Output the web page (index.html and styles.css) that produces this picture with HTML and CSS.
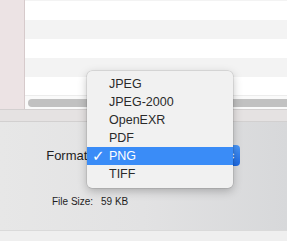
FILE: index.html
```html
<!DOCTYPE html>
<html lang="en">
<head>
    <meta charset="UTF-8">
    <title>Export</title>
    <link rel="stylesheet" href="styles.css">
</head>
<body>
    <div class="window">
        <div class="browser">
            <div class="sidebar"></div>
            <div class="list">
                <div class="rows">
                    <div class="row odd cut"></div>
                    <div class="row"></div>
                    <div class="row odd"></div>
                    <div class="row"></div>
                    <div class="row odd"></div>
                    <div class="row last"></div>
                </div>
                <div class="scrollbar">
                    <div class="thumb"></div>
                </div>
            </div>
        </div>
        <div class="divider"></div>
        <div class="panel">
            <div class="field">
                <span class="label">Format:</span>
                <div class="popup-btn">
                    <span class="arrows">
                        <svg width="6" height="10" viewBox="0 0 6 10"><path d="M1 4 L3 2 L5 4 M1 6 L3 8 L5 6" fill="none" stroke="#fff" stroke-width="1.2"/></svg>
                    </span>
                </div>
            </div>
            <div class="check-row">
                <span class="checkbox"></span>
            </div>
            <div class="info">
                <span class="info-label">File Size:</span>
                <span class="info-value">59 KB</span>
            </div>
        </div>
        <div class="footer"></div>

        <div class="menu">
            <div class="item">JPEG</div>
            <div class="item">JPEG-2000</div>
            <div class="item">OpenEXR</div>
            <div class="item">PDF</div>
            <div class="item selected"><span class="tick">✓</span>PNG</div>
            <div class="item">TIFF</div>
        </div>
    </div>
</body>
</html>
```

FILE: styles.css
```css
body {
    margin: 0;
    font-family: 'Liberation Sans', Arial, sans-serif;
    color: #262626;
    overflow: hidden;
}
.window {
    position: relative;
    width: 287px;
    height: 241px;
    display: flex;
    flex-direction: column;
    overflow: hidden;
}
.browser {
    display: flex;
    height: 110px;
    border-bottom: 1px solid #d3d0d0;
    box-sizing: border-box;
}
.sidebar {
    width: 24px;
    background: #ece3e4;
    border-right: 1px solid #d6cacb;
}
.list {
    flex: 1;
    display: flex;
    flex-direction: column;
    background: #fff;
}
.rows {
    flex: 1;
}
.row {
    height: 19px;
    background: #fff;
}
.row.odd {
    background: #f3f3f3;
}
.row.cut {
    height: 1px;
}
.row.last {
    height: 18px;
}
.scrollbar {
    height: 14px;
    border-top: 1px solid #ececec;
    background: #fafafa;
    padding: 3px 0 0 3px;
    box-sizing: border-box;
}
.thumb {
    height: 8px;
    background: #c1c1c1;
    border-radius: 4px 0 0 4px;
}
.divider {
    height: 11px;
    background: #e5e2e2;
    border-bottom: 1px solid #d2d0d0;
}
.panel {
    flex: 1;
    background: linear-gradient(to right, #e7e7e7 0%, #e2e2e3 50%, #d7d8da 100%);
    padding: 23px 0 0 0;
    display: flex;
    flex-direction: column;
}
.field {
    display: flex;
    align-items: center;
    height: 21px;
}
.label {
    font-size: 13px;
    width: 92px;
    text-align: right;
    padding-right: 1px;
    box-sizing: border-box;
    color: #1e1e1e;
}
.popup-btn {
    margin-left: 4px;
    width: 144px;
    height: 21px;
    border-radius: 4px;
    background: linear-gradient(#4a97f8, #1c68e2);
    display: flex;
    align-items: center;
    justify-content: flex-end;
    padding: 0 5px;
    box-sizing: border-box;
}
.arrows {
    display: flex;
}
.check-row {
    display: flex;
    align-items: center;
    margin: 8px 0 0 100px;
    height: 14px;
}
.checkbox {
    width: 13px;
    height: 13px;
    border-radius: 3px;
    background: linear-gradient(#4a97f8, #1c68e2);
}
.info {
    display: flex;
    margin: 8px 0 0 52px;
    font-size: 10px;
    color: #1e1e1e;
}
.info-label {
    width: 49px;
}
.footer {
    height: 10px;
    background: #efefef;
    border-top: 1px solid #dadada;
}
.menu {
    position: absolute;
    left: 87px;
    top: 71px;
    width: 146px;
    padding: 4px 0 5px;
    box-sizing: border-box;
    background: #f1f1f1;
    border-radius: 5px;
    box-shadow: 0 0 0 0.5px rgba(0, 0, 0, 0.15), 0 3px 10px rgba(0, 0, 0, 0.25);
}
.item {
    position: relative;
    height: 18px;
    line-height: 18px;
    padding-left: 22px;
    font-size: 12.5px;
    color: #2a2a2a;
}
.item.selected {
    background: #3a8cf7;
    color: #fff;
}
.tick {
    position: absolute;
    left: 5px;
    top: 0;
    font-family: 'DejaVu Sans', sans-serif;
    font-size: 15px;
    font-weight: bold;
}
```
